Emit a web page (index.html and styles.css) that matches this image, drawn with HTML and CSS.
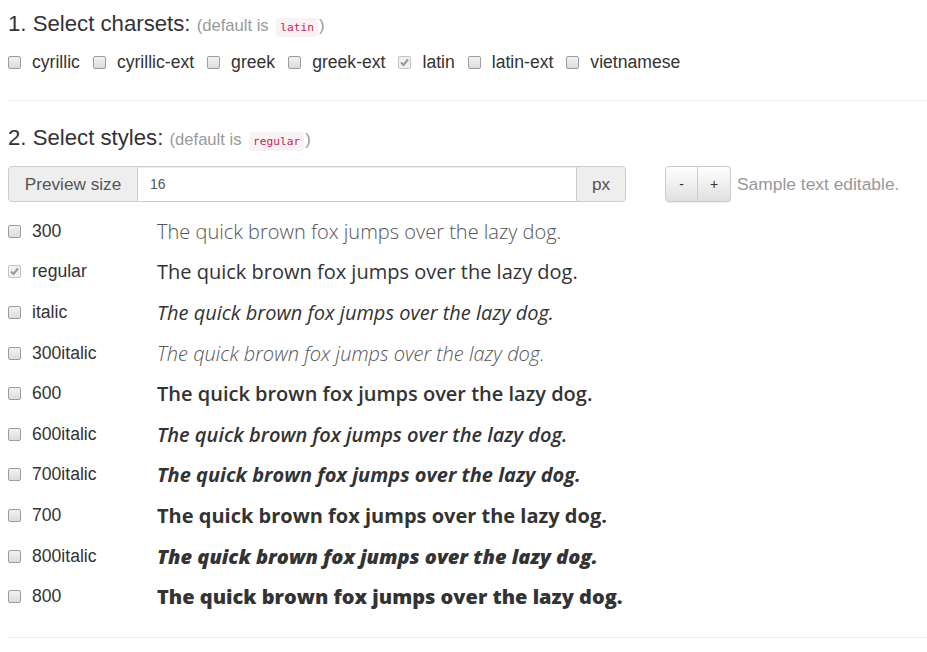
FILE: index.html
```html
<!DOCTYPE html>
<html>
<head>
<meta charset="utf-8">
<link rel="stylesheet" href="styles.css">
</head>
<body>
<h3 class="title">1. Select charsets: <small class="hint">(default is <code>latin</code>)</small></h3>
<div class="charsets">
  <label class="cs"><input type="checkbox" class="cb"> cyrillic</label>
  <label class="cs"><input type="checkbox" class="cb"> cyrillic-ext</label>
  <label class="cs"><input type="checkbox" class="cb"> greek</label>
  <label class="cs"><input type="checkbox" class="cb"> greek-ext</label>
  <label class="cs"><input type="checkbox" class="cb" checked disabled> latin</label>
  <label class="cs"><input type="checkbox" class="cb"> latin-ext</label>
  <label class="cs"><input type="checkbox" class="cb"> vietnamese</label>
</div>
<hr class="sep">
<h3 class="title title2">2. Select styles: <small class="hint">(default is <code>regular</code>)</small></h3>
<div class="controls">
  <div class="input-group">
    <span class="addon addon-left">Preview size</span>
    <input class="size-input" type="text" value="16">
    <span class="addon addon-right">px</span>
  </div>
  <div class="btn-group">
    <button class="btn">-</button>
    <button class="btn">+</button>
  </div>
  <span class="editable-hint">Sample text editable.</span>
</div>
<div class="styles">
  <label class="row"><span class="lbl"><input type="checkbox" class="cb"> 300</span><span class="sample w300">The quick brown fox jumps over the lazy dog.</span></label>
  <label class="row"><span class="lbl"><input type="checkbox" class="cb" checked disabled> regular</span><span class="sample w400">The quick brown fox jumps over the lazy dog.</span></label>
  <label class="row"><span class="lbl"><input type="checkbox" class="cb"> italic</span><span class="sample w400 it">The quick brown fox jumps over the lazy dog.</span></label>
  <label class="row"><span class="lbl"><input type="checkbox" class="cb"> 300italic</span><span class="sample w300 it">The quick brown fox jumps over the lazy dog.</span></label>
  <label class="row"><span class="lbl"><input type="checkbox" class="cb"> 600</span><span class="sample w600">The quick brown fox jumps over the lazy dog.</span></label>
  <label class="row"><span class="lbl"><input type="checkbox" class="cb"> 600italic</span><span class="sample w600 it">The quick brown fox jumps over the lazy dog.</span></label>
  <label class="row"><span class="lbl"><input type="checkbox" class="cb"> 700italic</span><span class="sample w700 it">The quick brown fox jumps over the lazy dog.</span></label>
  <label class="row"><span class="lbl"><input type="checkbox" class="cb"> 700</span><span class="sample w700">The quick brown fox jumps over the lazy dog.</span></label>
  <label class="row"><span class="lbl"><input type="checkbox" class="cb"> 800italic</span><span class="sample w800 it">The quick brown fox jumps over the lazy dog.</span></label>
  <label class="row"><span class="lbl"><input type="checkbox" class="cb"> 800</span><span class="sample w800">The quick brown fox jumps over the lazy dog.</span></label>
</div>
<hr class="sep sep2">
</body>
</html>
```
FILE: styles.css
```css
html, body {
  background: #fff;
}
body {
  margin: 0 0 0 8px;
  font-family: "Liberation Sans", Arial, sans-serif;
  font-size: 16px;
  color: #333;
}
.title {
  margin: 11px 0 0;
  font-size: 22.2px;
  font-weight: 400;
  line-height: 26px;
  height: 26px;
}
.title2 {
  margin-top: 24px;
}
.hint {
  font-size: 16.6px;
  color: #999;
  font-weight: 400;
}
code {
  font-family: "DejaVu Sans Mono", "Liberation Mono", monospace;
  font-size: 11.2px;
  color: #c7254e;
  background: #f9f2f4;
  padding: 3px 4px;
  margin: 0 1px 0 3px;
  border-radius: 4px;
}
.charsets {
  margin-top: 15px;
  height: 20px;
  display: flex;
  align-items: center;
  gap: 13px;
  font-size: 17.6px;
}
.cs {
  display: flex;
  align-items: center;
  gap: 11px;
}
.cb {
  appearance: none;
  -webkit-appearance: none;
  margin: 0;
  width: 13px;
  height: 13px;
  border: 1px solid #9c9c9c;
  border-radius: 2px;
  background: linear-gradient(#f2f2f2, #dcdcdc);
  flex: none;
}
.cb:checked {
  border-color: #c4c4c4;
  background: #f0f0f0 url("data:image/svg+xml;utf8,<svg xmlns='http://www.w3.org/2000/svg' width='11' height='11' viewBox='0 0 11 11'><path d='M2 5.5 L4.5 8 L9 2.5' fill='none' stroke='%23999' stroke-width='2'/></svg>") center/11px 11px no-repeat;
}
.sep {
  margin: 28px 0 0;
  border: 0;
  border-top: 1px solid #eee;
}
.sep2 {
  margin-top: 20px;
}
.controls {
  margin-top: 15px;
  display: flex;
  align-items: center;
  height: 36px;
}
.input-group {
  display: flex;
  width: 618px;
  height: 36px;
}
.addon {
  display: flex;
  align-items: center;
  justify-content: center;
  background: #eee;
  border: 1px solid #ccc;
  color: #555;
  font-size: 17.2px;
  box-sizing: border-box;
}
.addon-left {
  width: 130px;
  border-radius: 4px 0 0 4px;
}
.addon-right {
  width: 50px;
  border-radius: 0 4px 4px 0;
}
.size-input {
  flex: 1;
  min-width: 0;
  border: 1px solid #ccc;
  border-left: 0;
  border-right: 0;
  margin: 0;
  padding: 0 12px;
  font-family: "Liberation Sans", Arial, sans-serif;
  font-size: 14px;
  color: #555;
  box-shadow: inset 0 1px 1px rgba(0,0,0,0.075);
  outline: none;
}
.btn-group {
  display: flex;
  margin-left: 39px;
  height: 36px;
}
.btn {
  width: 33px;
  height: 36px;
  margin: 0;
  border: 1px solid #ccc;
  background: linear-gradient(#fff, #e0e0e0);
  color: #333;
  font-family: "Liberation Sans", Arial, sans-serif;
  font-size: 14px;
  padding: 0;
  box-shadow: inset 0 1px 0 rgba(255,255,255,.15), 0 1px 1px rgba(0,0,0,.075);
}
.btn:first-child {
  border-radius: 4px 0 0 4px;
}
.btn:last-child {
  border-radius: 0 4px 4px 0;
  border-left: 0;
}
.editable-hint {
  margin-left: 6px;
  color: #999;
  font-size: 17.4px;
}
.styles {
  margin-top: 9px;
}
.row {
  display: flex;
  align-items: center;
  height: 40.6px;
}
.lbl {
  width: 149px;
  display: flex;
  align-items: center;
  gap: 11px;
  font-size: 17.6px;
  color: #333;
}
.sample {
  font-family: "Open Sans", sans-serif;
  font-size: 20px;
  color: #333;
}
.w300 { font-weight: 300; color: #555; }
.w400 { font-weight: 400; }
.w600 { font-weight: 600; }
.w700 { font-weight: 700; }
.w800 { font-weight: 800; }
.it { font-style: italic; }
```
